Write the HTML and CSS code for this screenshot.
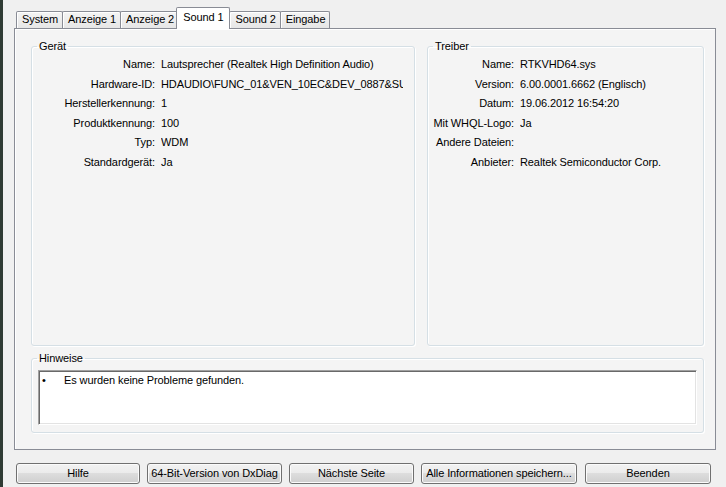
FILE: index.html
```html
<html>
  <head>
    <meta charset="utf-8">
    <link rel="stylesheet" href="styles.css">
  </head>
  <body>
    <div class="window">
      <div class="tabs">
        <span class="tab">System</span>
        <span class="tab">Anzeige 1</span>
        <span class="tab">Anzeige 2</span>
        <span class="tab active">Sound 1</span>
        <span class="tab">Sound 2</span>
        <span class="tab">Eingabe</span>
      </div>
      <div class="panel">
        <div class="topRow">
          <fieldset class="group device">
            <legend>Gerät</legend>
            <div class="rows">
              <span class="label">Name:</span><span class="value">Lautsprecher (Realtek High Definition Audio)</span>
              <span class="label">Hardware-ID:</span><span class="value">HDAUDIO\FUNC_01&amp;VEN_10EC&amp;DEV_0887&amp;SUBSYS_10438445&amp;REV_1003</span>
              <span class="label">Herstellerkennung:</span><span class="value">1</span>
              <span class="label">Produktkennung:</span><span class="value">100</span>
              <span class="label">Typ:</span><span class="value">WDM</span>
              <span class="label">Standardgerät:</span><span class="value">Ja</span>
            </div>
          </fieldset>
          <fieldset class="group driver">
            <legend>Treiber</legend>
            <div class="rows">
              <span class="label">Name:</span><span class="value">RTKVHD64.sys</span>
              <span class="label">Version:</span><span class="value">6.00.0001.6662 (Englisch)</span>
              <span class="label">Datum:</span><span class="value">19.06.2012 16:54:20</span>
              <span class="label">Mit WHQL-Logo:</span><span class="value">Ja</span>
              <span class="label">Andere Dateien:</span><span class="value"></span>
              <span class="label">Anbieter:</span><span class="value">Realtek Semiconductor Corp.</span>
            </div>
          </fieldset>
        </div>
        <fieldset class="group notes">
          <legend>Hinweise</legend>
          <div class="textbox">
            <p><span class="bullet">•</span>Es wurden keine Probleme gefunden.</p>
          </div>
        </fieldset>
      </div>
      <div class="buttons">
        <div class="btn help">Hilfe</div>
        <div class="btn bit64">64-Bit-Version von DxDiag</div>
        <div class="btn next">Nächste Seite</div>
        <div class="btn save">Alle Informationen speichern...</div>
        <div class="btn quit">Beenden</div>
      </div>
    </div>
  </body>
</html>
```
FILE: styles.css
```css
* {
  padding: 0;
  margin: 0;
  box-sizing: border-box;
}
body {
  background-color: #f0f0f0;
  font-family: "Liberation Sans", Arial, sans-serif;
  font-size: 11px;
  letter-spacing: -0.1px;
  color: #000;
  overflow: hidden;
}
.window {
  height: 487px;
  border-left: 3px solid #2f3b34;
  padding-left: 11px;
}
.tabs {
  display: flex;
  align-items: flex-end;
  height: 28px;
  padding-left: 2px;
}
.tab {
  position: relative;
  height: 17px;
  line-height: 15px;
  padding: 0 4px 0 5px;
  border: 1px solid #898c95;
  border-bottom: none;
  border-radius: 2px 2px 0 0;
  margin-right: -1px;
  background: linear-gradient(#f4f4f4, #e6e6e6);
  box-shadow: inset 1px 1px 0 #fff;
  color: #000;
}
.tab.active {
  z-index: 2;
  height: 22px;
  line-height: 18px;
  margin: 0 -1px -1px -2px;
  padding: 0 6px;
  background: #fff;
  box-shadow: none;
}
.panel {
  width: 702px;
  height: 422px;
  border: 1px solid #898c95;
  background-color: #f4f4f4;
  padding: 11px 11px 16px 16px;
  box-shadow: inset 1px 1px 0 #fff;
}
.topRow {
  display: flex;
  gap: 12px;
}
.group {
  border: 1px solid #d5dfe5;
  border-radius: 3px;
  box-shadow: inset 1px 1px 0 #fff, 1px 1px 0 #fff;
}
.group legend {
  margin-left: 5px;
  padding: 0 2px;
  line-height: 13px;
}
.device {
  width: 384px;
  height: 306px;
}
.driver {
  width: 277px;
  height: 306px;
}
.rows {
  display: grid;
  column-gap: 6px;
  padding-top: 2px;
  line-height: 19.5px;
}
.device .rows {
  grid-template-columns: 123px 1fr;
}
.driver .rows {
  grid-template-columns: 86px 1fr;
}
.label {
  text-align: right;
  white-space: nowrap;
}
.value {
  white-space: nowrap;
  overflow: hidden;
  margin-right: 11px;
  height: 19.5px;
}
.notes {
  margin-top: 6px;
  height: 81px;
}
.textbox {
  height: 55px;
  margin: 5px 6px 0 6px;
  background-color: #fff;
  border: 1px solid;
  border-color: #a0a0a0 #fff #fff #a0a0a0;
  box-shadow: inset 1px 1px 0 #696969, inset -1px -1px 0 #e3e3e3;
  padding: 3px 0 0 3px;
  line-height: 13px;
}
.bullet {
  display: inline-block;
  width: 22px;
}
.buttons {
  display: flex;
  gap: 7px;
  margin-top: 13px;
  padding-left: 2px;
}
.btn {
  height: 21px;
  line-height: 19px;
  text-align: center;
  border: 1px solid #707070;
  border-radius: 3px;
  background: linear-gradient(#f2f2f2 0%, #ebebeb 50%, #dddddd 50%, #cfcfcf 100%);
  box-shadow: inset 0 0 0 1px #fbfbfb;
  white-space: nowrap;
}
.help { width: 124px; }
.bit64 { width: 135px; }
.next { width: 125px; }
.save { width: 156px; }
.quit { width: 126px; margin-left: 1px; }
```
